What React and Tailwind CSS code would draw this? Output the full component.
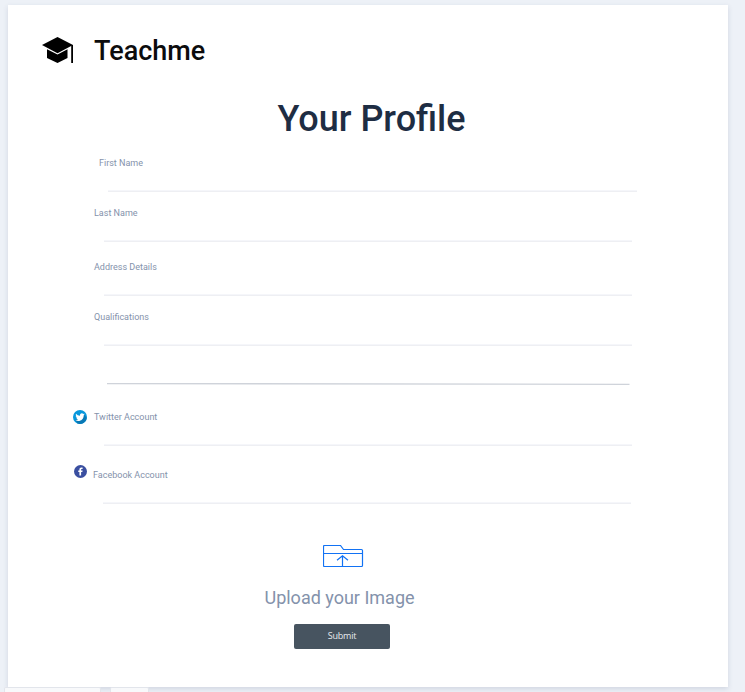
import React from "react";

function Label({ children }) {
  return (
    <label className="block h-3 whitespace-nowrap text-[9px] leading-3 text-[#8492ab]">
      {children}
    </label>
  );
}

function Underline({ className = "" }) {
  return <div className={`h-0.5 border-t border-[#f5f6fa] bg-[#eeeff3] ${className}`} />;
}

function Field({ label, className = "", line = "ml-[10px] w-[528px]" }) {
  return (
    <div className={className}>
      <Label>{label}</Label>
      <Underline className={`mt-[21px] ${line}`} />
    </div>
  );
}

function CapLogo() {
  return (
    <svg className="h-[26px] w-8" viewBox="0 0 32 26">
      <path d="M15.5 0 31 8 15.5 16.3 0 8z" />
      <path d="M5 12.2 15.5 17.6 25.5 12.2V21L15.5 26 5 21z" />
      <path d="M29.2 8H31V26H29.2z" />
    </svg>
  );
}

function TwitterIcon() {
  return (
    <svg className="h-[14px] w-[14px] shrink-0" viewBox="0 0 28 28">
      <circle cx="14" cy="14" r="14" fill="#0797dc" />
      <path d="M22 9 27.5 16A14 14 0 0 1 9 27L5 20z" fill="#0878b5" />
      <path
        d="M23.5 8.4c-.7.3-1.4.5-2.2.6.8-.5 1.4-1.2 1.7-2.1-.7.4-1.6.8-2.4.9a3.9 3.9 0 0 0-6.6 3.5c-3.2-.2-6-1.7-7.9-4-1 1.8-.5 4 1.2 5.2-.6 0-1.2-.2-1.7-.5 0 1.9 1.3 3.5 3.1 3.9-.6.1-1.2.1-1.7 0 .5 1.5 1.9 2.6 3.6 2.7A7.9 7.9 0 0 1 5 20.2c6.8 4.3 16.4.2 16.5-9.8.8-.5 1.5-1.2 2-2z"
        fill="white"
      />
    </svg>
  );
}

function FacebookIcon() {
  return (
    <svg className="h-[13px] w-[13px] shrink-0" viewBox="0 0 26 26">
      <circle cx="13" cy="13" r="13" fill="#3a4fa0" />
      <path d="M10.8 21V14H8.5v-3h2.3V9c0-2.8 1.5-4.2 4.1-4.2l2.3.2v2.8h-1.5c-1.2 0-1.5.7-1.5 1.5V11h3l-.5 3h-2.5v7z" fill="white" />
    </svg>
  );
}

function FolderIcon() {
  return (
    <svg className="ml-[7px] h-[23px] w-[41px]" viewBox="0 0 41 23" fill="none" stroke="#1272f4" strokeWidth="1.2">
      <path d="M1.5.5H17.5L20.5 4.500H38.500Q39.500 4.500 39.500 5.500V20.500Q39.500 21.500 38.500 21.500H1.500Q.5 21.500.5 20.500V1.500Q.5.5 1.500.5z" />
      <path d="M.5 8.500H39.500M19.500 21.500V10.500M14 15.300 19.500 10.800 25 15.300" />
    </svg>
  );
}

export default function App() {
  return (
    <div className="flex h-[692px] w-[745px] flex-col overflow-hidden bg-[#edf1f7] pt-[5px] font-['Roboto',sans-serif]">
      <main className="ml-2 h-[682px] w-[720px] shrink-0 bg-white shadow-[0_2px_5px_rgba(60,75,110,0.16)]">
        <header className="flex h-[90px] items-center gap-5 pl-[34px]">
          <CapLogo />
          <span className="pt-0.5 text-[27px] font-medium leading-8 text-[#0c0c0d]">Teachme</span>
        </header>
        <h1 className="h-[62px] w-[727px] text-center text-[36px] font-medium leading-[48px] text-[#1e2d43]">
          Your Profile
        </h1>

        <form>
          <Field label="First Name" className="ml-[91px] h-[50px]" line="ml-[9px] w-[529px]" />
          <Field label="Last Name" className="ml-[86px] h-[54px]" />
          <Field label="Address Details" className="ml-[86px] h-[50px]" />
          <Field label="Qualifications" className="ml-[86px] h-[72px]" />
          <svg className="ml-[99px] block h-[3px] w-[523px]" viewBox="0 0 523 3">
            <path d="M0 .5 522.5 1.3" stroke="#cfd3da" strokeWidth="1.3" />
          </svg>

          <div className="mt-[25px] flex h-[58px] gap-[7px] pl-[65px]">
            <div className="-mt-px">
              <TwitterIcon />
            </div>
            <Field label="Twitter Account" />
          </div>
          <div className="flex h-[76px] gap-[6px] pl-[66px]">
            <div className="-mt-1">
              <FacebookIcon />
            </div>
            <Field label="Facebook Account" />
          </div>

          <div className="flex w-[663px] flex-col items-center">
            <FolderIcon />
            <p className="mt-[18px] h-6 text-[18px] leading-6 text-[#8492ab]">Upload your Image</p>
            <button
              type="button"
              className="ml-[5px] mt-[14px] h-[25px] w-24 rounded-[2px] bg-[#475460] pb-0.5 font-['Open_Sans',sans-serif] text-[9px] leading-[23px] tracking-[-0.2px] text-[#e8eaee]"
            >
              Submit
            </button>
          </div>
        </form>
      </main>
      <footer className="z-10 ml-1 flex h-[5px] gap-[9px]">
        <div className="w-[97px] rounded-t-[2px] border border-b-0 border-[#e2e5eb] bg-[#f8f9fb]" />
        <div className="w-[39px] rounded-t-[2px] border border-b-0 border-[#e2e5eb] bg-[#f8f9fb]" />
      </footer>
    </div>
  );
}
